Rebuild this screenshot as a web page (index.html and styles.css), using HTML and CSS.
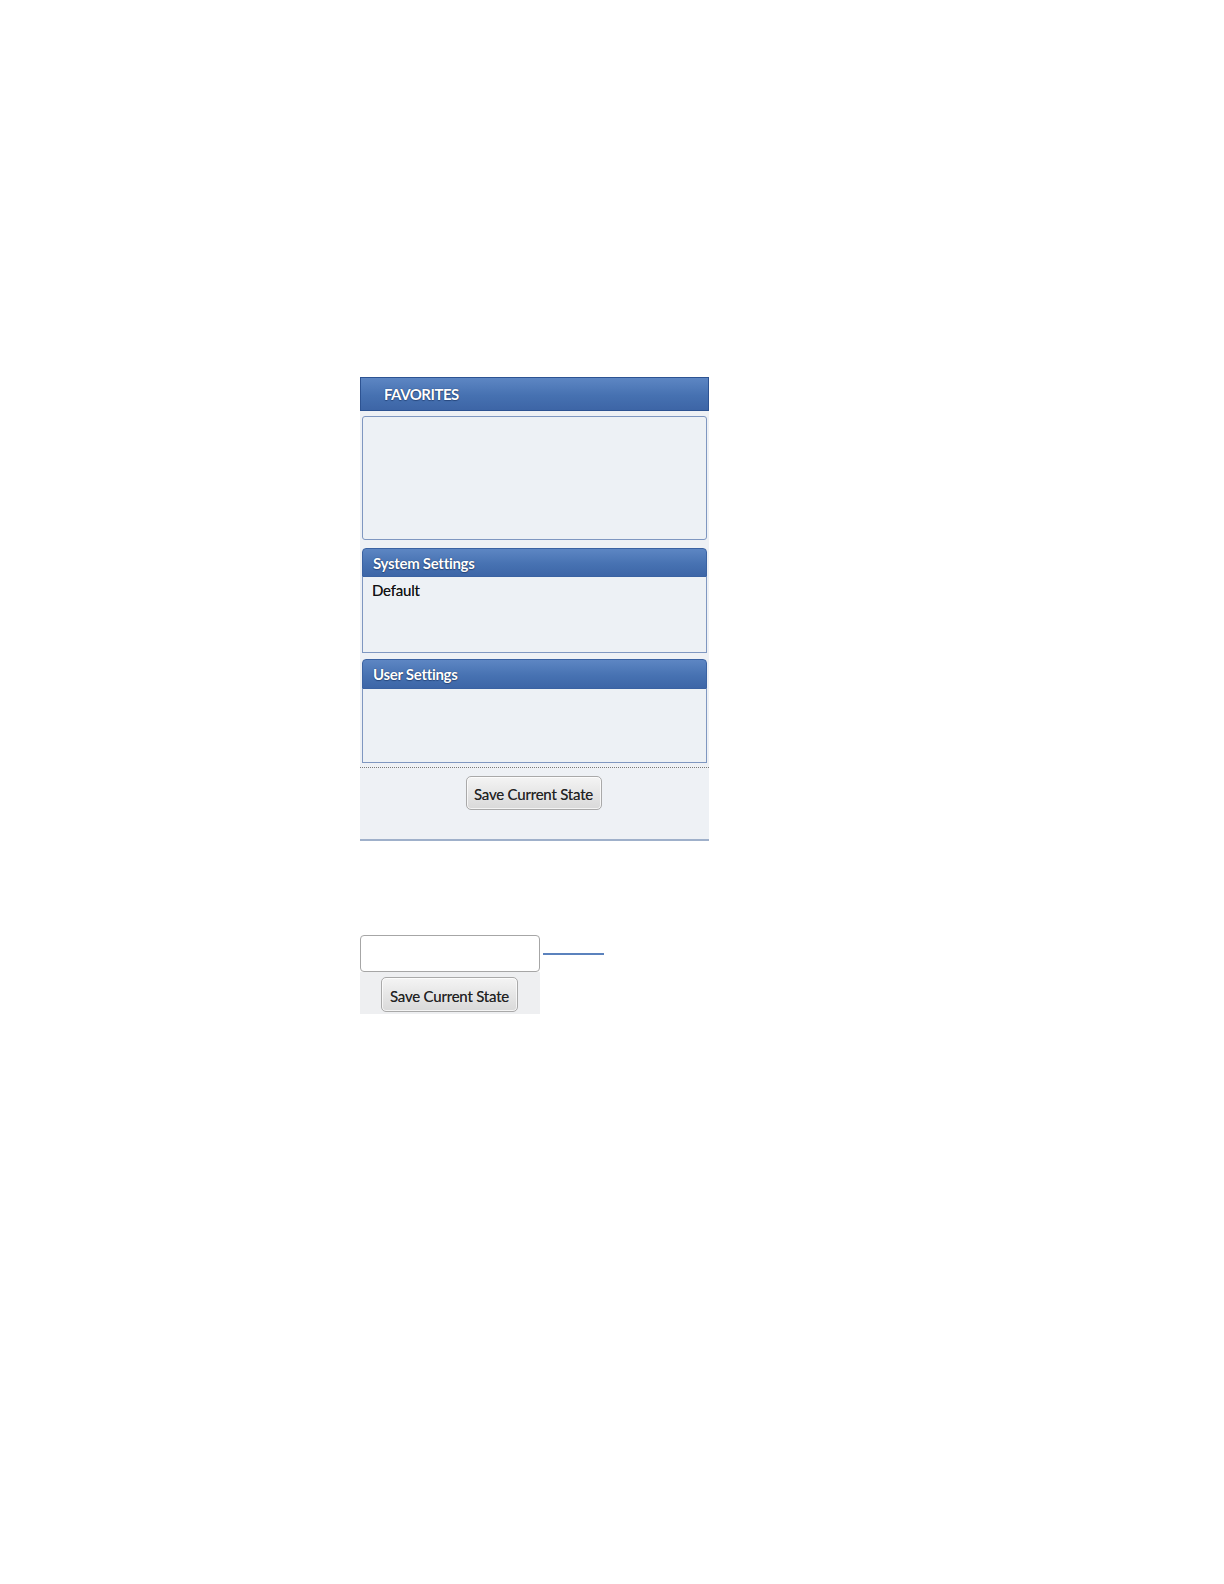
FILE: index.html
```html
<!DOCTYPE html>
<html>
<head>
<meta charset="utf-8">
<link rel="stylesheet" href="styles.css">
</head>
<body>
<div class="page">
  <div class="panel">
    <div class="panel-head">FAVORITES</div>
    <div class="fav-box"></div>
    <div class="section sys">
      <div class="sec-head">System Settings</div>
      <div class="sec-body"><div class="item">Default</div></div>
    </div>
    <div class="section user">
      <div class="sec-head">User Settings</div>
      <div class="sec-body"></div>
    </div>
    <div class="panel-foot">
      <button class="btn">Save Current State</button>
    </div>
  </div>

  <div class="mini">
    <div class="mini-row">
      <div class="input-box"></div>
      <div class="connector"></div>
    </div>
    <div class="mini-foot">
      <button class="btn">Save Current State</button>
    </div>
  </div>
</div>
</body>
</html>
```

FILE: styles.css
```css
html, body {
  margin: 0;
  padding: 0;
  background: #ffffff;
}
.page {
  padding: 377px 0 0 360px;
  font-family: Lato, "Open Sans", "Liberation Sans", sans-serif;
}
.panel {
  width: 349px;
  background: #eef1f5;
  border-bottom: 2px solid #9fb0ca;
  box-sizing: border-box;
}
.panel-head {
  height: 34px;
  box-sizing: border-box;
  border: 1px solid #2d5392;
  background: linear-gradient(#5d86c3, #4671b1 55%, #3d65a6);
  color: #ffffff;
  font-weight: 700;
  font-size: 15px;
  letter-spacing: -0.5px;
  padding-left: 23px;
  display: flex;
  align-items: center;
  text-shadow: 0 0 1px rgba(10, 30, 70, 0.9), 0 1px 1px rgba(10, 30, 70, 0.4);
}
.fav-box {
  height: 124px;
  margin: 5px 2px 0 2px;
  box-sizing: border-box;
  border: 1px solid #7f97c0;
  border-radius: 3px;
  background: #edf1f5;
}
.section {
  margin: 8px 2px 0 2px;
}
.section.user {
  margin-top: 6px;
}
.sec-head {
  height: 29px;
  box-sizing: border-box;
  border-radius: 4px 4px 0 0;
  border: 1px solid #3a62a2;
  background: linear-gradient(#5d86c3, #4772b2 55%, #3d66a7);
  color: #ffffff;
  font-weight: 700;
  font-size: 15px;
  letter-spacing: -0.3px;
  padding-left: 10px;
  display: flex;
  align-items: center;
  text-shadow: 0 0 1px rgba(10, 30, 70, 0.9), 0 1px 1px rgba(10, 30, 70, 0.4);
}
.user .sec-head {
  height: 30px;
}
.sec-body {
  height: 76px;
  box-sizing: border-box;
  border: 1px solid #7f97c0;
  border-top: none;
  background: #edf1f5;
}
.user .sec-body {
  height: 74px;
}
.item {
  font-size: 15px;
  color: #111111;
  padding: 4px 0 0 9px;
  letter-spacing: -0.2px;
  text-shadow: 0 0 0.5px rgba(0, 0, 0, 0.6);
}
.panel-foot {
  margin-top: 4px;
  border-top: 1px dotted #7a7a7a;
  height: 72px;
  box-sizing: border-box;
  display: flex;
  justify-content: center;
  padding-top: 8px;
  padding-right: 2px;
}
.btn {
  width: 136px;
  height: 34px;
  box-sizing: border-box;
  border: 1px solid #a9a9a9;
  border-radius: 5px;
  background: linear-gradient(#f4f4f4, #e6e6e6 50%, #d9d9d9);
  font-family: Lato, "Open Sans", "Liberation Sans", sans-serif;
  font-size: 15px;
  color: #222222;
  padding: 2px 0 0 0;
  letter-spacing: -0.2px;
  box-shadow: inset 0 0 0 1px rgba(255, 255, 255, 0.7);
  text-shadow: 0 0 0.5px rgba(0, 0, 0, 0.5);
}
.mini {
  margin-top: 94px;
  width: 250px;
}
.mini-row {
  display: flex;
  align-items: center;
}
.input-box {
  width: 180px;
  height: 37px;
  box-sizing: border-box;
  border: 1px solid #a6a6a6;
  border-radius: 4px;
  background: #ffffff;
}
.connector {
  width: 61px;
  height: 2px;
  margin-left: 3px;
  background: #5b82bd;
}
.mini-foot {
  width: 180px;
  height: 42px;
  background: #eeeff1;
  box-sizing: border-box;
  padding: 5px 0 0 21px;
}
.mini-foot .btn {
  width: 137px;
  height: 35px;
}
```
